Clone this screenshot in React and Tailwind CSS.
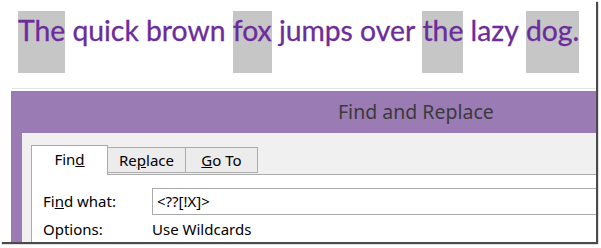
import React from 'react'

const words = [
  { w: 'The', hl: true },
  { w: 'quick' },
  { w: 'brown' },
  { w: 'fox', hl: true },
  { w: 'jumps' },
  { w: 'over' },
  { w: 'the', hl: true },
  { w: 'lazy' },
  { w: 'dog.', hl: true },
]

const App = () => {
  return (
    <div className="h-[248px] w-[601px] bg-white">
      <div className="h-[242px] w-[596px] overflow-hidden bg-white shadow-[2px_2px_1px_#4a4a4a]">
        {/* sentence */}
        <div className="ml-[12px] h-[89px] border-b border-[#e4e4e4] pt-[11px] pl-[6px]">
          <div className="whitespace-nowrap font-['Lato',sans-serif] text-[28.3px] leading-[30px] text-[#6c2c9c] [-webkit-text-stroke:0.3px_#6c2c9c]">
            {words.map((item, i) => (
              <React.Fragment key={i}>
                <span
                  className={
                    'inline-block h-[62px] align-top pt-[4px] ' +
                    (item.hl ? 'bg-[#c6c6c6]' : '')
                  }
                >
                  {item.w}
                </span>
                {i < words.length - 1 ? ' ' : ''}
              </React.Fragment>
            ))}
          </div>
        </div>

        {/* dialog */}
        <div className="ml-[11px] mt-[2px] bg-[#9b7bb4] pl-[11px] font-['Noto_Sans',sans-serif]">
          <div className="flex h-[42px] items-center pl-[316px] text-[19.5px] text-[#3a3a3a]">
            Find and Replace
          </div>
          <div className="bg-[#f0f0f0] pl-[9px] pt-[11px] text-[15px] text-black">
            <div className="flex items-start">
              <div className="relative top-[1px] flex h-[30px] w-[77px] items-center justify-center border border-b-0 border-[#ababab] bg-white pb-[2px]">
                Fin<span className="underline">d</span>
              </div>
              <div className="mt-[3px] flex h-[26px] w-[78px] items-center justify-center border border-l-0 border-[#ababab] bg-[#ececec]">
                Re<span className="underline">p</span>lace
              </div>
              <div className="mt-[3px] flex h-[26px] w-[72px] items-center justify-center border border-l-0 border-[#ababab] bg-[#ececec]">
                <span className="underline">G</span>o To
              </div>
            </div>
            <div className="h-[80px] border-l border-t border-[#ababab] bg-white pl-[11px] pt-[13px]">
              <div className="flex items-center">
                <div className="w-[109px]">
                  Fi<span className="underline">n</span>d what:
                </div>
                <div className="flex h-[27px] flex-1 items-center border border-r-0 border-[#ababab] pl-[4px]">
                  &lt;??[!X]&gt;
                </div>
              </div>
              <div className="mt-[3px] flex items-center">
                <div className="w-[109px]">Options:</div>
                <div>Use Wildcards</div>
              </div>
            </div>
          </div>
        </div>
      </div>
    </div>
  )
}

export default App
